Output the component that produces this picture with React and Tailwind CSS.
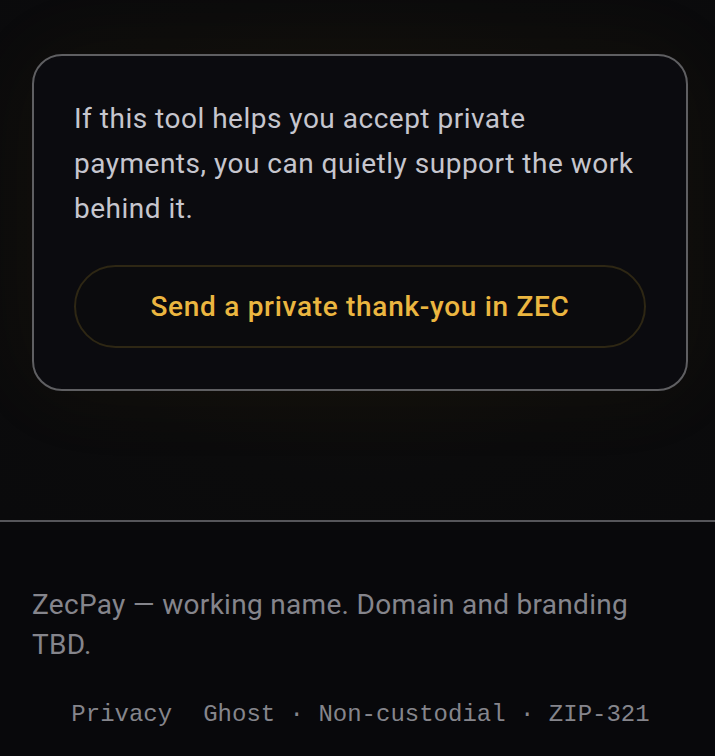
export default function App() {
  return (
    <div className="min-h-[756px] bg-[#09090b] flex flex-col" style={{ fontFamily: "Roboto, 'Noto Sans', sans-serif" }}>
      <section className="relative pl-[32px] pr-[27px] pt-[54px] pb-[129px] bg-[radial-gradient(ellipse_at_50%_45%,#12100b_0%,#0b0b0c_60%,#0a0a0c_100%)]">
        <div className="rounded-[30px] border-2 border-[#5f5f62] bg-[#0b0b0f] px-[40px] pt-[40px] pb-[41px] shadow-[0_0_90px_rgba(180,130,30,0.06)]">
          <p className="text-[28px] leading-[45px] tracking-[0.5px] text-[#c6c6ce]">
            If this tool helps you accept private payments, you can quietly support the work behind it.
          </p>
          <button className="mt-[34px] w-full h-[83px] rounded-full border-2 border-[#2e2714] bg-[#0b0b0d] text-[#ebb640] text-[28px] tracking-[0.7px] font-medium">
            Send a private thank-you in ZEC
          </button>
        </div>
      </section>
      <div className="h-[2px] bg-[#55555a]" />
      <footer className="flex-1 bg-[#08080b] px-[32px] pt-[63px]">
        <p className="text-[28px] leading-[40px] tracking-[0.3px] text-[#85858c]">
          ZecPay — working name. Domain and branding TBD.
        </p>
        <div className="mt-[32px] pl-[6px] flex justify-center text-[24px] leading-[36px] text-[#85858c]" style={{ fontFamily: "'Liberation Mono', 'DejaVu Sans Mono', monospace" }}>
          <span className="mr-[31px]">Privacy</span>
          <span>Ghost · Non-custodial · ZIP-321</span>
        </div>
      </footer>
    </div>
  );
}
